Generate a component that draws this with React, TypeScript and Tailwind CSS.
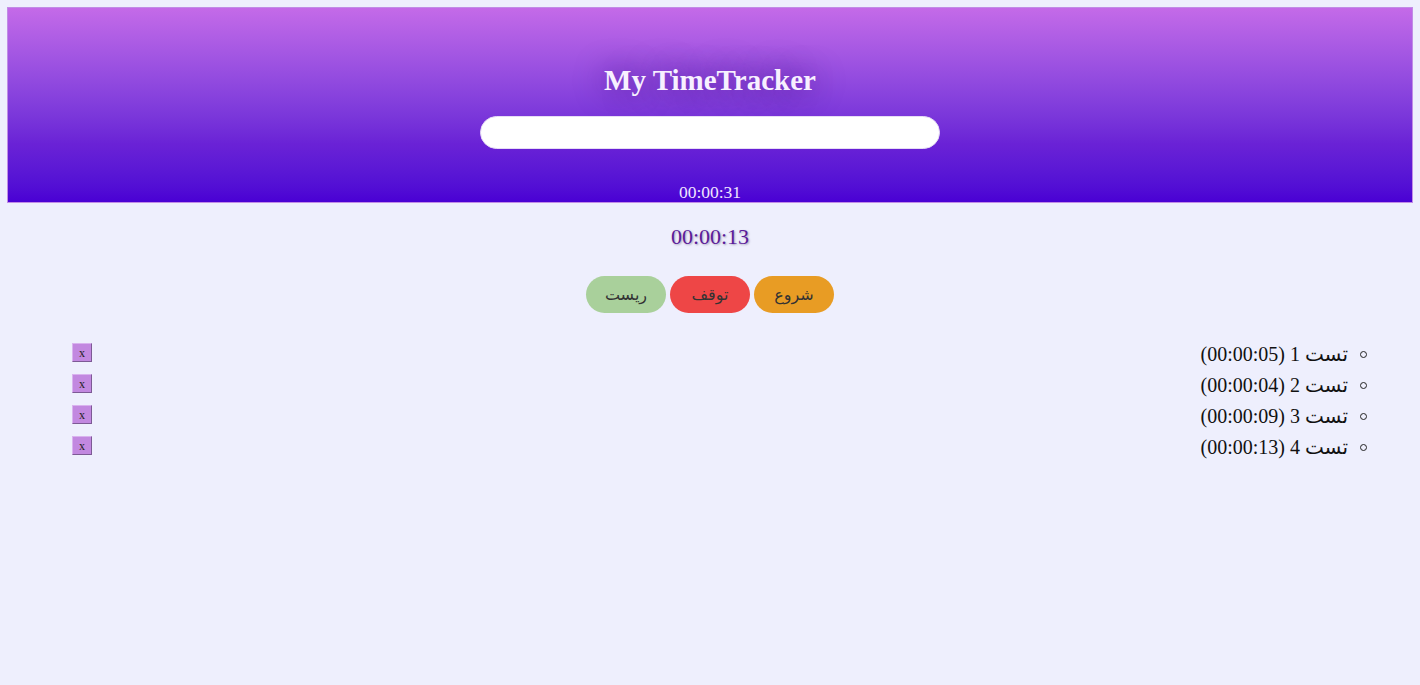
import React from "react";

const items = [
  { name: "تست 1", time: "00:00:05" },
  { name: "تست 2", time: "00:00:04" },
  { name: "تست 3", time: "00:00:09" },
  { name: "تست 4", time: "00:00:13" },
];

export default function App() {
  return (
    <div
      className="min-h-[685px] w-full bg-[#eeeffd] p-[7px]"
      style={{ fontFamily: '"Liberation Serif", "DejaVu Sans", serif' }}
    >
      <header className="flex h-[196px] flex-col items-center border border-[#c18ce6] bg-gradient-to-b from-[#c46ae8] via-[#6a22d6] via-70% to-[#4a00d4] pt-[56px]">
        <h1 className="text-[29px] leading-[32px] font-bold text-[#f7f0ff] [text-shadow:0_0_30px_rgba(60,10,130,0.95)]">
          My TimeTracker
        </h1>
        <input
          type="text"
          className="mt-[20px] h-[35px] w-[460px] rounded-full border border-[#e6dcf5] bg-white px-4 outline-none"
        />
        <div className="mt-[33px] text-[17.5px] leading-[20px] text-[#f0e6ff]">00:00:31</div>
      </header>

      <div className="mt-[21px] text-center text-[22px] leading-[26px] text-[#5a1a9a] [text-shadow:1px_1px_2px_rgba(120,110,140,0.6)]">
        00:00:13
      </div>

      <div dir="rtl" className="mt-[26px] flex justify-center gap-[4px]">
        <button className="h-[37px] w-[80px] rounded-full bg-[#e89c24] text-[16px] tracking-[2px] text-[#333]">
          شروع
        </button>
        <button className="h-[37px] w-[80px] rounded-full bg-[#ee4646] text-[16px] tracking-[2px] text-[#333]">
          توقف
        </button>
        <button className="h-[37px] w-[80px] rounded-full bg-[#a9d09b] text-[16px] tracking-[2px] text-[#333]">
          ریست
        </button>
      </div>

      <div dir="rtl" className="mt-[25px] flex flex-col pl-[65px] pr-[46px]">
        {items.map((it) => (
          <div key={it.name} className="flex h-[31px] items-start justify-between">
            <div className="flex h-[32px] items-center text-[20px] text-[#111]">
              <span className="ml-[12px] inline-block h-[7px] w-[7px] rounded-full border border-[#222]" />
              <span>
                {it.name} ({it.time})
              </span>
            </div>
            <button className="mt-[5px] flex h-[19px] w-[20px] items-center justify-center border border-t-[#d9b3ef] border-l-[#d9b3ef] border-r-[#7d5a95] border-b-[#7d5a95] bg-[#c288e0] text-[12px] leading-none text-[#222]">
              x
            </button>
          </div>
        ))}
      </div>
    </div>
  );
}
